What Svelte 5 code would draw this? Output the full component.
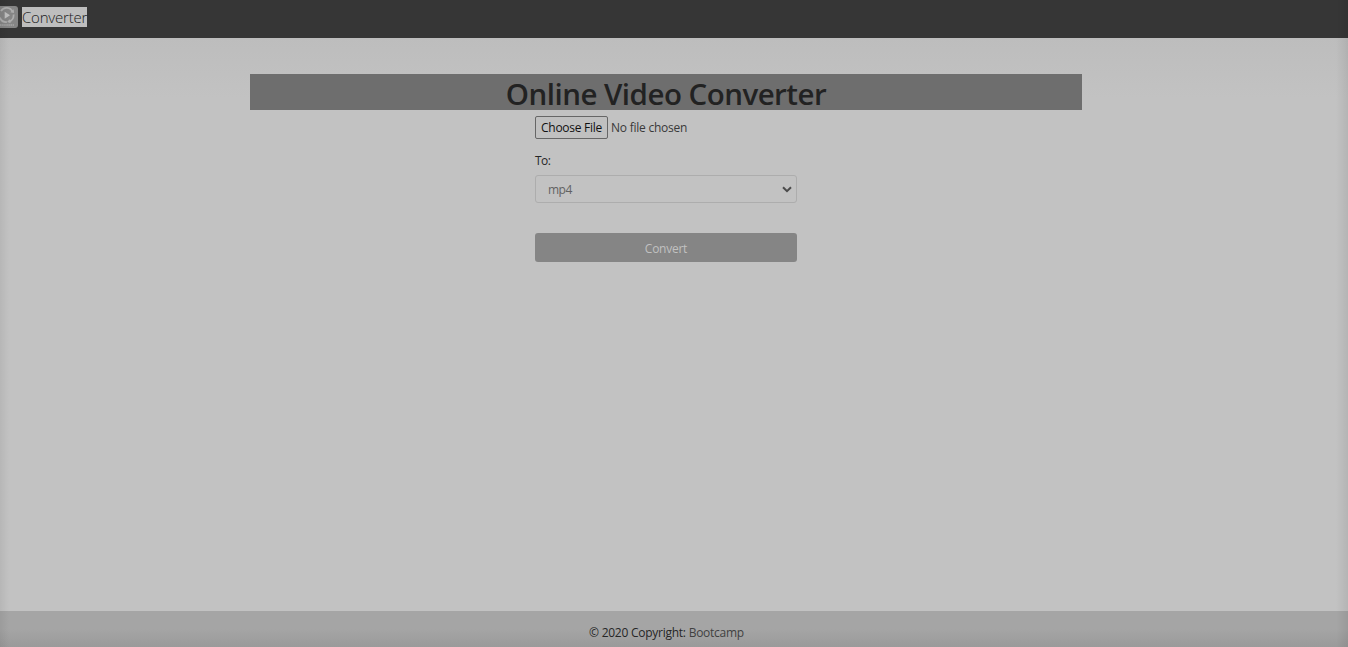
<script>
  let format = $state('mp4');
</script>

<div class="page">
  <header>
    <svg class="logo" viewBox="0 0 18 22" aria-hidden="true">
      <path d="M0 0H15Q18 0 18 3V19Q18 22 15 22H0Z" fill="#858585" />
      <path d="M1 5A6.5 6.5 0 0 1 12.6 6M13.5 8.5A6.5 6.5 0 0 1 8.8 15.7M6.8 16A6.5 6.5 0 0 1 0 11.6" fill="none" stroke="#adadad" stroke-width="1.8" />
      <path d="M10.2 6.3L14 6.9L13.7 3.3ZM9.7 13.2L7.1 15.9L10.7 17Z" fill="#adadad" />
      <path d="M4.7 5.7L10 9.3L4.7 12.8Z" fill="#bebebe" />
      <path d="M0 19H14" stroke="#a7a7a7" stroke-width="1.5" stroke-dasharray="1.5 .6" />
    </svg>
    <a class="brand" href="#home"><span>Converter</span></a>
  </header>

  <main>
    <h1><span>Online Video Converter</span></h1>
    <form>
      <div class="file">
        <button type="button"><span>Choose File</span></button>
        <span class="none">No file chosen</span>
      </div>
      <label for="format"><span>To:</span></label>
      <div class="select">
        <select id="format" bind:value={format}>
          <option>mp4</option>
        </select>
        <svg viewBox="0 0 10 7" aria-hidden="true"><path d="M1 1.2L5 5.2L9 1.2" /></svg>
      </div>
      <button type="button" class="convert"><span>Convert</span></button>
    </form>
  </main>

  <footer>
    <span class="copy">© 2020 Copyright:</span>
    <a href="#bootcamp">Bootcamp</a>
  </footer>
  <div class="shade"></div>
</div>

<style>
  :global(body) { margin: 0; overflow: hidden; }
  .page {
    position: relative;
    box-sizing: border-box;
    height: 647px;
    display: flex;
    flex-direction: column;
    background: #c2c2c2;
    color: #262626;
    font: 12px/18px "Open Sans", "Noto Sans", sans-serif;
  }
  header {
    height: 38px;
    box-sizing: border-box;
    display: flex;
    align-items: flex-start;
    padding-top: 6px;
    gap: 4px;
    background: #363636;
  }
  .logo { width: 18px; height: 22px; display: block; }
  .brand {
    box-sizing: border-box;
    width: 65px;
    height: 20px;
    margin-top: 1px;
    background: #bebebe;
    color: #1c1c1c;
    font-size: 15px;
    font-weight: 300;
    line-height: 21px;
    letter-spacing: -0.2px;
    text-decoration: none;
    white-space: nowrap;
  }
  main {
    flex: 1;
    padding: 36px 16px 0 0;
    display: flex;
    flex-direction: column;
    align-items: center;
    background: linear-gradient(#bdbdbd, #c2c2c2 60px);
  }
  h1 {
    width: 832px;
    height: 36px;
    margin: 0;
    background: #6e6e6e;
    color: #222;
    font-size: 29.5px;
    font-weight: 600;
    line-height: 39px;
    letter-spacing: -0.52px;
    text-align: center;
    white-space: nowrap;
  }
  form { width: 262px; display: flex; flex-direction: column; padding-top: 6px; }
  .file { display: flex; align-items: center; gap: 3px; height: 23px; white-space: nowrap; }
  .file button {
    box-sizing: border-box;
    width: 73px;
    height: 23px;
    padding: 0;
    border: 1px solid #666;
    border-radius: 2px;
    background: #c0c0c0;
    color: #111;
    font: inherit;
    font-size: 12px;
    letter-spacing: -0.28px;
    white-space: nowrap;
  }
  .none { font-size: 12px; letter-spacing: -0.24px; color: #393939; }
  label { margin-top: 13px; height: 18px; font-size: 12px; letter-spacing: -0.5px; }
  .select { position: relative; height: 28px; margin-top: 5px; }
  select {
    display: block;
    appearance: none;
    box-sizing: border-box;
    width: 262px;
    height: 28px;
    padding: 2px 12px 0;
    border: 1px solid #adadad;
    border-radius: 3px;
    background: #c2c2c2;
    color: #626262;
    font: inherit;
    line-height: 24px;
    letter-spacing: -0.5px;
  }
  .select svg { position: absolute; right: 5px; top: 11px; width: 10px; height: 7px; fill: none; stroke: #4b4b4b; stroke-width: 2; pointer-events: none; }
  .convert {
    height: 29px;
    margin-top: 30px;
    padding: 2px 0 0;
    border: 0;
    border-radius: 3px;
    background: #858585;
    color: #c1c1c1;
    font: inherit;
    letter-spacing: -0.25px;
  }
  footer {
    box-sizing: border-box;
    height: 36px;
    padding: 13px 15px 0 0;
    display: flex;
    justify-content: center;
    gap: 3px;
    background: linear-gradient(#a5a5a5 50%, #9a9a9a);
    font-size: 12px;
    letter-spacing: -0.26px;
    white-space: nowrap;
  }
  footer a { color: #414141; text-decoration: none; }
  .shade {
    position: absolute;
    inset: 0;
    pointer-events: none;
    background: linear-gradient(90deg, rgba(0,0,0,.06), transparent 9px, transparent calc(100% - 12px), rgba(0,0,0,.07));
  }
</style>
